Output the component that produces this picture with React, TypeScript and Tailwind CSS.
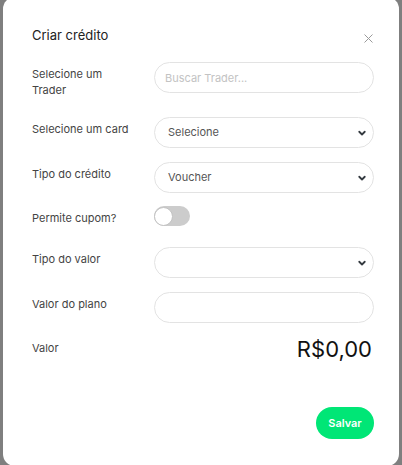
import { useState } from "react";

const font = { fontFamily: "Inter, 'Noto Sans', sans-serif" };

function Chevron() {
  return (
    <svg width="10" height="8" viewBox="0 0 16 16" className="shrink-0" fill="none">
      <path d="M2.5 5.5l5.5 5.5 5.5-5.5" stroke="#343a40" strokeWidth="3.6" strokeLinecap="round" strokeLinejoin="round" />
    </svg>
  );
}

function Label({ children }: { children: React.ReactNode }) {
  return (
    <div className="w-[122px] shrink-0 pt-[4px]">
      <p className="max-w-[103px] text-[11px] leading-4 text-[#444]">{children}</p>
    </div>
  );
}

function SelectBox({ value }: { value?: string }) {
  return (
    <button className="flex h-[31px] flex-1 items-center justify-between rounded-full border border-[#e3e3e3] bg-white pl-[13px] pr-[6px] text-left">
      <span className="text-[11px] text-[#555]">{value ?? ""}</span>
      <Chevron />
    </button>
  );
}

export default function App() {
  const [cupom, setCupom] = useState(false);

  return (
    <div className="h-[465px] w-[402px] overflow-hidden bg-[#7f7f7f]" style={font}>
      <div className="-mt-[3px] ml-[3px] flex h-[469px] w-[396px] flex-col rounded-[12px] bg-white pl-[29px] pr-[25px] pt-[28px]">

        {/* Header */}
        <div className="flex items-start justify-between">
          <h2 className="text-[13px] leading-5 text-[#222]">Criar crédito</h2>
          <button className="mr-[1px] mt-[9px]">
            <svg width="9" height="9" viewBox="0 0 9 9">
              <path d="M0.5 0.5l8 8M8.5 0.5l-8 8" stroke="#9a9a9a" strokeWidth="1" />
            </svg>
          </button>
        </div>

        {/* Trader */}
        <div className="mt-[17px] flex h-[55px] items-start">
          <Label>Selecione um Trader</Label>
          <input
            placeholder="Buscar Trader..."
            className="h-[31px] flex-1 rounded-full border border-[#e3e3e3] bg-white px-[10px] text-[11px] text-[#555] outline-none placeholder:text-[#c3c3c3]"
          />
        </div>

        {/* Card */}
        <div className="flex h-[45px] items-start">
          <Label>Selecione um card</Label>
          <SelectBox value="Selecione" />
        </div>

        {/* Tipo do crédito */}
        <div className="flex h-[44px] items-start">
          <Label>Tipo do crédito</Label>
          <SelectBox value="Voucher" />
        </div>

        {/* Cupom */}
        <div className="flex h-[41px] items-start">
          <Label>Permite cupom?</Label>
          <button
            onClick={() => setCupom(!cupom)}
            className={`flex h-[20px] w-[36px] items-center rounded-full ${cupom ? "justify-end bg-[#00e676]" : "justify-start bg-[#cccccc]"}`}
          >
            <span className="h-[19px] w-[19px] rounded-full border border-[#c2c2c2] bg-white" />
          </button>
        </div>

        {/* Tipo do valor */}
        <div className="flex h-[45px] items-start">
          <Label>Tipo do valor</Label>
          <SelectBox />
        </div>

        {/* Valor do plano */}
        <div className="flex h-[44px] items-start">
          <Label>Valor do plano</Label>
          <input className="h-[31px] flex-1 rounded-full border border-[#e3e3e3] bg-white px-[10px] text-[11px] outline-none" />
        </div>

        {/* Valor */}
        <div className="flex items-start justify-between">
          <p className="mt-[4px] text-[11px] leading-4 text-[#444]">Valor</p>
          <p className="mr-[2px] text-[22px] leading-[26px] text-[#111]">R$0,00</p>
        </div>

        {/* Footer */}
        <div className="mt-[45px] flex justify-end">
          <button className="h-[32px] w-[58px] rounded-full bg-[#00e676] text-[11px] font-semibold text-white">
            Salvar
          </button>
        </div>
      </div>
    </div>
  );
}
